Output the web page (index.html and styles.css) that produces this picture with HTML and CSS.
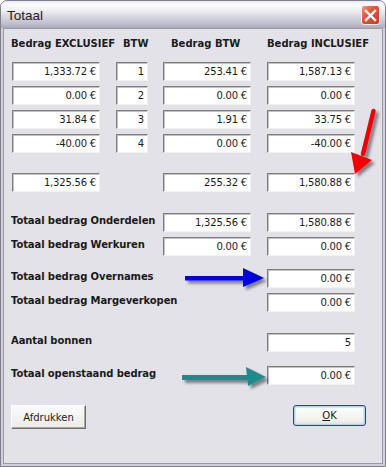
FILE: index.html
```html
<!DOCTYPE html>
<html>
<head>
<meta charset="utf-8">
<title>Totaal</title>
<link rel="stylesheet" href="styles.css">
</head>
<body>
<div class="window">
  <div class="titlebar">
    <span class="title">Totaal</span>
    <span class="close">
      <svg width="13" height="13" viewBox="0 0 13 13"><path d="M2 2 L11 11 M11 2 L2 11" stroke="#fff" stroke-width="2.4" stroke-linecap="square"/></svg>
    </span>
  </div>
  <div class="client">
    <div class="grid head">
      <div class="h h1">Bedrag EXCLUSIEF</div>
      <div class="h h2">BTW</div>
      <div class="h h3">Bedrag BTW</div>
      <div class="h h4">Bedrag INCLUSIEF</div>
    </div>
    <div class="grid rows">
      <div class="field">1,333.72 €</div><div class="field small">1</div><div class="field">253.41 €</div><div class="field">1,587.13 €</div>
      <div class="field">0.00 €</div><div class="field small">2</div><div class="field">0.00 €</div><div class="field">0.00 €</div>
      <div class="field">31.84 €</div><div class="field small">3</div><div class="field">1.91 €</div><div class="field">33.75 €</div>
      <div class="field">-40.00 €</div><div class="field small">4</div><div class="field">0.00 €</div><div class="field">-40.00 €</div>
    </div>
    <div class="grid total">
      <div class="field">1,325.56 €</div><div></div><div class="field">255.32 €</div><div class="field">1,580.88 €</div>
    </div>

    <div class="lgrid sec1">
      <div class="label">Totaal bedrag Onderdelen</div><div class="field">1,325.56 €</div><div class="field">1,580.88 €</div>
      <div class="label">Totaal bedrag Werkuren</div><div class="field">0.00 €</div><div class="field">0.00 €</div>
    </div>
    <div class="lgrid sec2">
      <div class="label">Totaal bedrag Overnames</div><div></div><div class="field">0.00 €</div>
      <div class="label">Totaal bedrag Margeverkopen</div><div></div><div class="field">0.00 €</div>
    </div>
    <div class="lgrid sec3">
      <div class="label">Aantal bonnen</div><div></div><div class="field">5</div>
    </div>
    <div class="lgrid sec4">
      <div class="label">Totaal openstaand bedrag</div><div></div><div class="field">0.00 €</div>
    </div>

    <div class="buttons">
      <button class="btn print">Afdrukken</button>
      <button class="btn ok"><u>O</u>K</button>
    </div>
  </div>
</div>

<svg class="arrows" width="386" height="467" viewBox="0 0 386 467">
  <defs>
    <filter id="sh" x="-50%" y="-50%" width="200%" height="200%">
      <feDropShadow dx="3" dy="3" stdDeviation="1.6" flood-color="#000" flood-opacity="0.45"/>
    </filter>
  </defs>
  <g filter="url(#sh)">
    <path d="M373.5 111 L363 154" stroke="#f20000" stroke-width="4.5" stroke-linecap="round"/>
    <polygon points="351,152 372,160 355,174" fill="#f20000"/>
  </g>
  <g filter="url(#sh)">
    <rect x="185" y="276" width="62" height="4.5" fill="#0000e0"/>
    <polygon points="243,268 243,287 264,278" fill="#0000e0"/>
  </g>
  <g filter="url(#sh)">
    <rect x="182" y="375" width="67" height="5" fill="#1f8c8a"/>
    <polygon points="246,367 248,386 266,377" fill="#1f8c8a"/>
  </g>
</svg>
</body>
</html>
```
FILE: styles.css
```css
html, body {
  margin: 0;
  padding: 0;
  background: #ffffff;
}

body {
  width: 386px;
  height: 467px;
  position: relative;
  overflow: hidden;
  font-family: "DejaVu Sans", Verdana, sans-serif;
  font-size: 10px;
  color: #1a1a1a;
}

.window {
  width: 386px;
  height: 467px;
  box-sizing: border-box;
  border: 1px solid #7e7e8e;
  border-radius: 7px 7px 0 0;
  background: #d0d0da;
  display: flex;
  flex-direction: column;
}

.titlebar {
  height: 27px;
  flex: none;
  display: flex;
  align-items: center;
  justify-content: space-between;
  padding: 0 5px 0 6px;
  border-radius: 6px 6px 0 0;
  background: linear-gradient(#e9e9ef 0%, #fbfbfc 12%, #f3f3f6 30%, #dadae3 55%, #c4c4d1 80%, #a9a9bb 100%);
}

.title {
  font-family: "Liberation Sans", Arial, sans-serif;
  font-size: 13.5px;
  color: #222;
  padding-top: 1px;
}

.close {
  width: 19px;
  height: 20px;
  box-sizing: border-box;
  border: 1px solid #f4f4f4;
  border-radius: 3px;
  background: linear-gradient(135deg, #ef9a7e 0%, #e0573a 40%, #c8392a 100%);
  display: flex;
  align-items: center;
  justify-content: center;
  margin-top: 1px;
}

.client {
  flex: 1;
  margin: 0 2px 2px 2px;
  border: 1px solid #9999a8;
  background: #e3e2e8;
  padding: 9px 0 0 8px;
  display: flex;
  flex-direction: column;
}

.grid {
  display: grid;
  grid-template-columns: 104px 47px 104px 88px;
}

.h {
  font-weight: bold;
  line-height: 12px;
  white-space: nowrap;
}
.h1 { margin-left: -1px; }
.h2 { padding-left: 7px; }
.h3 { padding-left: 8px; }

.rows {
  margin-top: 12px;
  row-gap: 5px;
}

.field {
  width: 88px;
  height: 19px;
  box-sizing: border-box;
  background: #ffffff;
  border-top: 1px solid #7c7c7c;
  border-left: 1px solid #7c7c7c;
  border-right: 1px solid #f2f2f2;
  border-bottom: 1px solid #f2f2f2;
  box-shadow: inset 1px 1px 0 #c2c2c2;
  text-align: right;
  padding-right: 3px;
  line-height: 17px;
  letter-spacing: -0.2px;
  white-space: nowrap;
  color: #1a1a1a;
}

.field.small {
  width: 32px;
}

.total {
  margin-top: 20px;
}

.lgrid {
  display: grid;
  grid-template-columns: 151px 104px 88px;
  row-gap: 5px;
}

.label {
  font-weight: bold;
  line-height: 15px;
  white-space: nowrap;
  margin-left: -1px;
  letter-spacing: -0.1px;
}

.sec1 { margin-top: 21px; }
.sec2 { margin-top: 13px; }
.sec3 { margin-top: 21px; }
.sec4 { margin-top: 14px; }

.buttons {
  margin-top: 20px;
  display: flex;
  justify-content: space-between;
  align-items: flex-start;
  padding-left: 0;
  padding-right: 16px;
  margin-left: -1px;
}

.btn {
  font-family: "DejaVu Sans", Verdana, sans-serif;
  font-size: 10px;
  color: #1a1a1a;
  padding: 0;
  margin: 0;
  box-sizing: border-box;
  cursor: default;
}

.print {
  width: 75px;
  height: 24px;
  border-top: 1px solid #ffffff;
  border-left: 1px solid #ffffff;
  border-right: 1px solid #6e6e6e;
  border-bottom: 1px solid #6e6e6e;
  box-shadow: inset -1px -1px 0 #a8a8a8;
  background: linear-gradient(#fbfbfb, #ecebe8);
}

.ok {
  width: 73px;
  height: 21px;
  border: 1px solid #22449a;
  border-radius: 3px;
  box-shadow: inset 0 0 0 1px #b9d0f6, inset 0 0 0 2px #d6e3f9;
  background: linear-gradient(#ffffff, #f0efea 80%, #dcdad2);
}

.arrows {
  position: absolute;
  left: 0;
  top: 0;
  pointer-events: none;
}
```
